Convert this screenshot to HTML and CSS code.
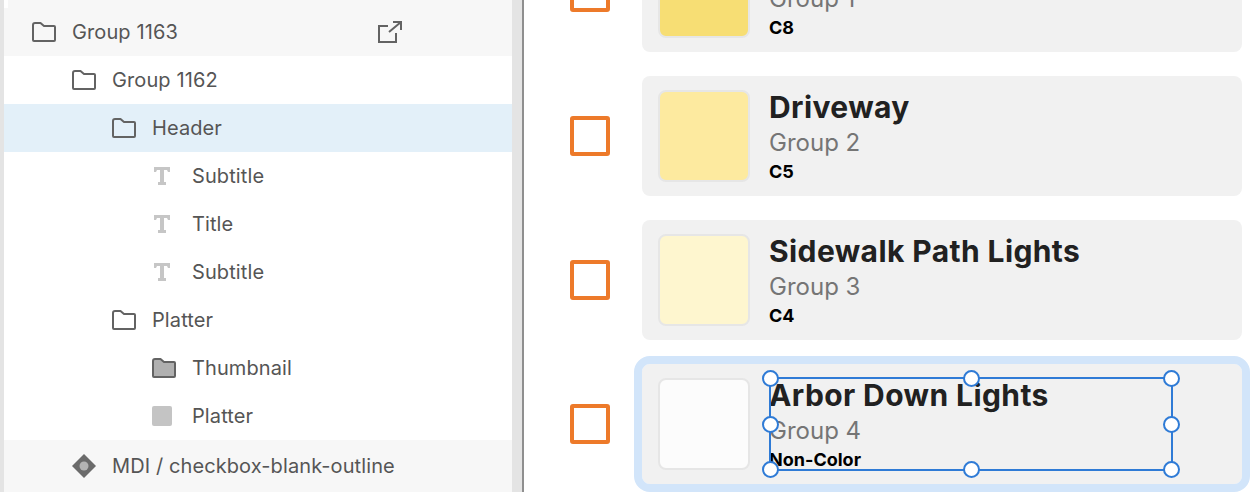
FILE: index.html
```html
<!DOCTYPE html>
<html lang="en">

<head>
    <meta charset="UTF-8" />
    <title>Layers</title>
    <link rel="stylesheet" href="styles.css">
</head>

<body>
    <svg class="defs" width="0" height="0">
        <symbol id="folder" viewBox="0 0 24 20">
            <path d="M1 18V3q0-2 2-2h5.5l3.5 3h10q1 0 1 1v13q0 1-1 1H2q-1 0-1-1z" />
        </symbol>
        <symbol id="text" viewBox="0 0 16 18">
            <path d="M0 0h16v5h-2l-1-2H10v12h2v3H4v-3h2V3H3L2 5H0z" />
        </symbol>
    </svg>

    <div class="layers">
        <div class="row row-hint">
            <svg class="icon folder depth-0"><use href="#folder" /></svg>
            <span>Group 1163</span>
            <svg class="open-link" viewBox="0 0 25 22">
                <path d="M11 5H2v16h17v-9M12 11L24 1M16 1h8v8" />
            </svg>
        </div>
        <div class="row">
            <svg class="icon folder depth-1"><use href="#folder" /></svg>
            <span>Group 1162</span>
        </div>
        <div class="row row-active">
            <svg class="icon folder depth-2"><use href="#folder" /></svg>
            <span>Header</span>
        </div>
        <div class="row">
            <svg class="icon text-icon depth-3"><use href="#text" /></svg>
            <span>Subtitle</span>
        </div>
        <div class="row">
            <svg class="icon text-icon depth-3"><use href="#text" /></svg>
            <span>Title</span>
        </div>
        <div class="row">
            <svg class="icon text-icon depth-3"><use href="#text" /></svg>
            <span>Subtitle</span>
        </div>
        <div class="row">
            <svg class="icon folder depth-2"><use href="#folder" /></svg>
            <span>Platter</span>
        </div>
        <div class="row">
            <svg class="icon folder folder-filled depth-3"><use href="#folder" /></svg>
            <span>Thumbnail</span>
        </div>
        <div class="row">
            <div class="icon depth-3"><div class="rect-icon"></div></div>
            <span>Platter</span>
        </div>
        <div class="row row-hint row-tall">
            <svg class="icon depth-1" viewBox="0 0 24 24">
                <path class="diamond" d="M12 0L24 12L12 24L0 12Z" />
                <circle class="diamond-hole" cx="12" cy="12" r="4.5" />
            </svg>
            <span>MDI / checkbox-blank-outline</span>
        </div>
    </div>

    <div class="canvas">
        <div class="list">
            <div class="item">
                <div class="checkbox"></div>
                <div class="card">
                    <div class="thumb thumb-c8"></div>
                    <div class="info">
                        <div class="info-title">&nbsp;</div>
                        <div class="info-group">Group 1</div>
                        <div class="info-code">C8</div>
                    </div>
                </div>
            </div>
            <div class="item">
                <div class="checkbox"></div>
                <div class="card">
                    <div class="thumb thumb-c5"></div>
                    <div class="info">
                        <div class="info-title">Driveway</div>
                        <div class="info-group">Group 2</div>
                        <div class="info-code">C5</div>
                    </div>
                </div>
            </div>
            <div class="item">
                <div class="checkbox"></div>
                <div class="card">
                    <div class="thumb thumb-c4"></div>
                    <div class="info">
                        <div class="info-title">Sidewalk Path Lights</div>
                        <div class="info-group">Group 3</div>
                        <div class="info-code">C4</div>
                    </div>
                </div>
            </div>
            <div class="item">
                <div class="checkbox"></div>
                <div class="card card-selected">
                    <div class="thumb thumb-none"></div>
                    <div class="info">
                        <div class="info-title">Arbor Down Lights</div>
                        <div class="info-group">Group 4</div>
                        <div class="info-code">Non-Color</div>
                        <div class="selection">
                            <i class="handle h-tl"></i>
                            <i class="handle h-tc"></i>
                            <i class="handle h-tr"></i>
                            <i class="handle h-ml"></i>
                            <i class="handle h-mr"></i>
                            <i class="handle h-bl"></i>
                            <i class="handle h-bc"></i>
                            <i class="handle h-br"></i>
                        </div>
                    </div>
                </div>
            </div>
        </div>
    </div>
</body>

</html>
```

FILE: styles.css
```css
* {
    box-sizing: border-box;
}

html,
body {
    margin: 0;
    padding: 0;
    height: 100%;
    overflow: hidden;
    background: #ffffff;
    font-family: Inter, "Liberation Sans", sans-serif;
}

body {
    display: flex;
}

.defs {
    position: absolute;
}

/* Layers panel */
.layers {
    width: 524px;
    height: 492px;
    flex-shrink: 0;
    padding: 8px 10px 0 4px;
    background: linear-gradient(#f7f7f7, #f7f7f7) 4px 0 / 508px 56px no-repeat, #ffffff;
    border-left: 4px solid #e4e4e4;
    border-right: 12px solid #e4e4e4;
    padding: 8px 0 0 0;
    box-shadow: inset -0px 0 0 #888888;
    position: relative;
}

.layers::after {
    content: "";
    position: absolute;
    top: 0;
    bottom: 0;
    right: -12px;
    width: 2px;
    background: #8f8f8f;
}

.row {
    display: flex;
    align-items: center;
    height: 48px;
    gap: 16px;
    font-size: 20px;
    letter-spacing: 0.1px;
    color: #555555;
}

.row-hint {
    background: #f7f7f7;
}

.row-tall {
    height: 52px;
}

.row-active {
    background: #e3f0f9;
}

.icon {
    width: 24px;
    height: 20px;
    flex-shrink: 0;
}

.depth-0 {
    margin-left: 28px;
}

.depth-1 {
    margin-left: 68px;
}

.depth-2 {
    margin-left: 108px;
}

.depth-3 {
    margin-left: 148px;
}

.folder {
    fill: none;
    stroke: #636363;
    stroke-width: 2;
    stroke-linejoin: round;
}

.folder-filled {
    fill: #b0b0b0;
}

.text-icon {
    height: 18px;
    padding: 0 6px 0 2px;
    fill: #c6c6c6;
}

.rect-icon {
    width: 20px;
    height: 20px;
    border-radius: 2px;
    background: #c4c4c4;
}

.row .diamond {
    fill: #6b6b6b;
}

.row .diamond-hole {
    fill: #b4b4b4;
}

.row svg.depth-1[viewBox] {
    height: 24px;
}

.open-link {
    width: 25px;
    height: 22px;
    margin-left: auto;
    margin-right: 110px;
    fill: none;
    stroke: #636363;
    stroke-width: 2;
}

/* Canvas */
.canvas {
    flex: 1;
    height: 492px;
    overflow: hidden;
}

.list {
    display: flex;
    flex-direction: column;
    gap: 24px;
    margin-top: -68px;
    padding-left: 46px;
}

.item {
    display: flex;
    align-items: center;
    gap: 32px;
}

.checkbox {
    width: 40px;
    height: 40px;
    flex-shrink: 0;
    border: 4px solid #ed7a2a;
    border-radius: 3px;
}

.card {
    width: 600px;
    height: 120px;
    display: flex;
    align-items: center;
    gap: 19px;
    padding-left: 16px;
    border-radius: 8px;
    background: #f1f1f1;
}

.card-selected {
    outline: 8px solid #d2e5fa;
}

.thumb {
    width: 92px;
    height: 92px;
    flex-shrink: 0;
    border: 2px solid #e6e6e6;
    border-radius: 8px;
}

.thumb-c8 {
    background: #f7de74;
}

.thumb-c5 {
    background: #fdea9f;
}

.thumb-c4 {
    background: #fef6cf;
}

.thumb-none {
    background: #fcfcfc;
}

.info {
    position: relative;
    width: 404px;
    height: 94px;
}

.info-title {
    height: 36px;
    font-size: 30px;
    line-height: 36px;
    font-weight: 700;
    letter-spacing: 0.4px;
    color: #212121;
}

.info-group {
    height: 36px;
    font-size: 24px;
    line-height: 36px;
    color: #757575;
}

.info-code {
    font-size: 18px;
    line-height: 22px;
    font-weight: 700;
    color: #000000;
}

/* Selection box drawn over the text block */
.selection {
    position: absolute;
    inset: 0;
    border: 2px solid #2f7bd6;
}

.handle {
    position: absolute;
    width: 17px;
    height: 17px;
    border: 2px solid #2f7bd6;
    border-radius: 50%;
    background: #ffffff;
}

.h-tl,
.h-tc,
.h-tr {
    top: -9px;
}

.h-ml,
.h-mr {
    top: 37px;
}

.h-bl,
.h-bc,
.h-br {
    bottom: -9px;
}

.h-tl,
.h-ml,
.h-bl {
    left: -9px;
}

.h-tc,
.h-bc {
    left: 192px;
}

.h-tr,
.h-mr,
.h-br {
    right: -9px;
}
```
